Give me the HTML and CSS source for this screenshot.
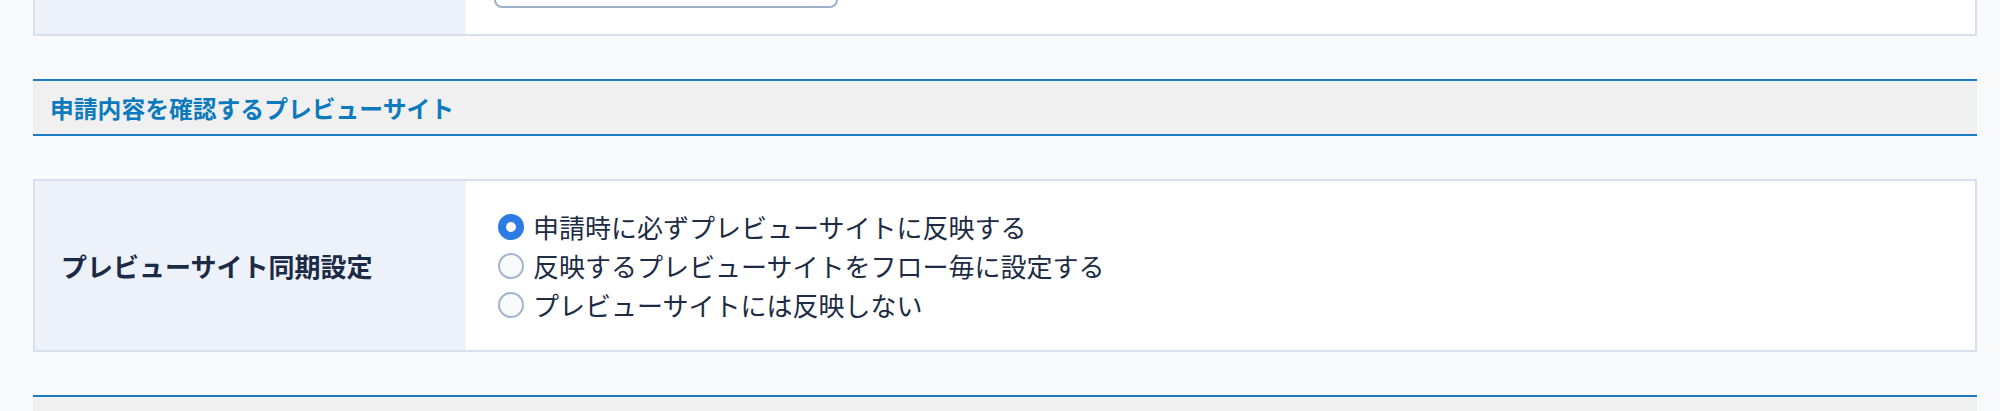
FILE: index.html
```html
<!DOCTYPE html>
<html lang="ja">
<head>
    <meta charset="UTF-8">
    <meta name="viewport" content="width=device-width, initial-scale=1.0">
    <title>プレビューサイト設定</title>
    <link rel="stylesheet" href="styles.css">
</head>
<body>

    <div class="page">
        <!-- 前のセクション（上端のみ見えている） -->
        <div class="card card-top">
            <div class="label-cell"></div>
            <div class="value-cell">
                <div class="text-box"></div>
            </div>
        </div>

        <!-- 申請内容を確認するプレビューサイト -->
        <h2 class="section-head">申請内容を確認するプレビューサイト</h2>

        <div class="card">
            <div class="label-cell">プレビューサイト同期設定</div>
            <div class="value-cell">
                <label class="radio-row">
                    <input type="radio" name="previewSync" checked>
                    <span>申請時に必ずプレビューサイトに反映する</span>
                </label>
                <label class="radio-row">
                    <input type="radio" name="previewSync">
                    <span>反映するプレビューサイトをフロー毎に設定する</span>
                </label>
                <label class="radio-row">
                    <input type="radio" name="previewSync">
                    <span>プレビューサイトには反映しない</span>
                </label>
            </div>
        </div>

        <!-- 次のセクション -->
        <h2 class="section-head"></h2>
    </div>

</body>
</html>
```

FILE: styles.css
```css
/* リセット */
* {
    margin: 0;
    padding: 0;
    box-sizing: border-box;
}

body {
    font-family: "Noto Sans CJK JP", "Noto Sans", sans-serif;
    background-color: #f8fafc;
    color: #1b2a45;
    padding: 0 23px 0 33px;
    height: 411px;
    overflow: hidden;
}

.page {
    margin-top: -72px;
}

/* カード */
.card {
    display: flex;
    border: 2px solid #d6e0ee;
    background-color: #ffffff;
}

.label-cell {
    width: 431px;
    flex-shrink: 0;
    background-color: #edf1f9;
    display: flex;
    align-items: center;
    padding: 0 26px;
    font-size: 26px;
    font-weight: 700;
    color: #1b2a45;
}

.value-cell {
    flex: 1;
    padding: 26px 0 26px 32px;
}

.card-top .value-cell {
    padding-left: 28px;
}

.text-box {
    width: 344px;
    height: 52px;
    border: 2px solid #9fb0cc;
    border-radius: 8px;
    background-color: #ffffff;
}

/* セクション見出し */
.section-head {
    margin: 43px 0;
    height: 57px;
    display: flex;
    align-items: center;
    padding: 0 17px;
    background-color: #f0f0f0;
    border-top: 2px solid #1b7cc2;
    border-bottom: 2px solid #1b7cc2;
    color: #0d7abe;
    font-size: 23.8px;
    font-weight: 700;
}

/* ラジオボタン */
.radio-row {
    display: flex;
    align-items: center;
    height: 39px;
    font-size: 26px;
    line-height: 39px;
    color: #1d2b45;
    cursor: pointer;
}

.radio-row input {
    appearance: none;
    -webkit-appearance: none;
    width: 26px;
    height: 26px;
    min-width: 26px;
    margin: 0 9px 0 0;
    border: 2px solid #a2b4d0;
    border-radius: 50%;
    background-color: #f8fafc;
    flex-shrink: 0;
}

.radio-row input:checked {
    border: 8px solid #2d7be4;
    background-color: #ffffff;
}
```
